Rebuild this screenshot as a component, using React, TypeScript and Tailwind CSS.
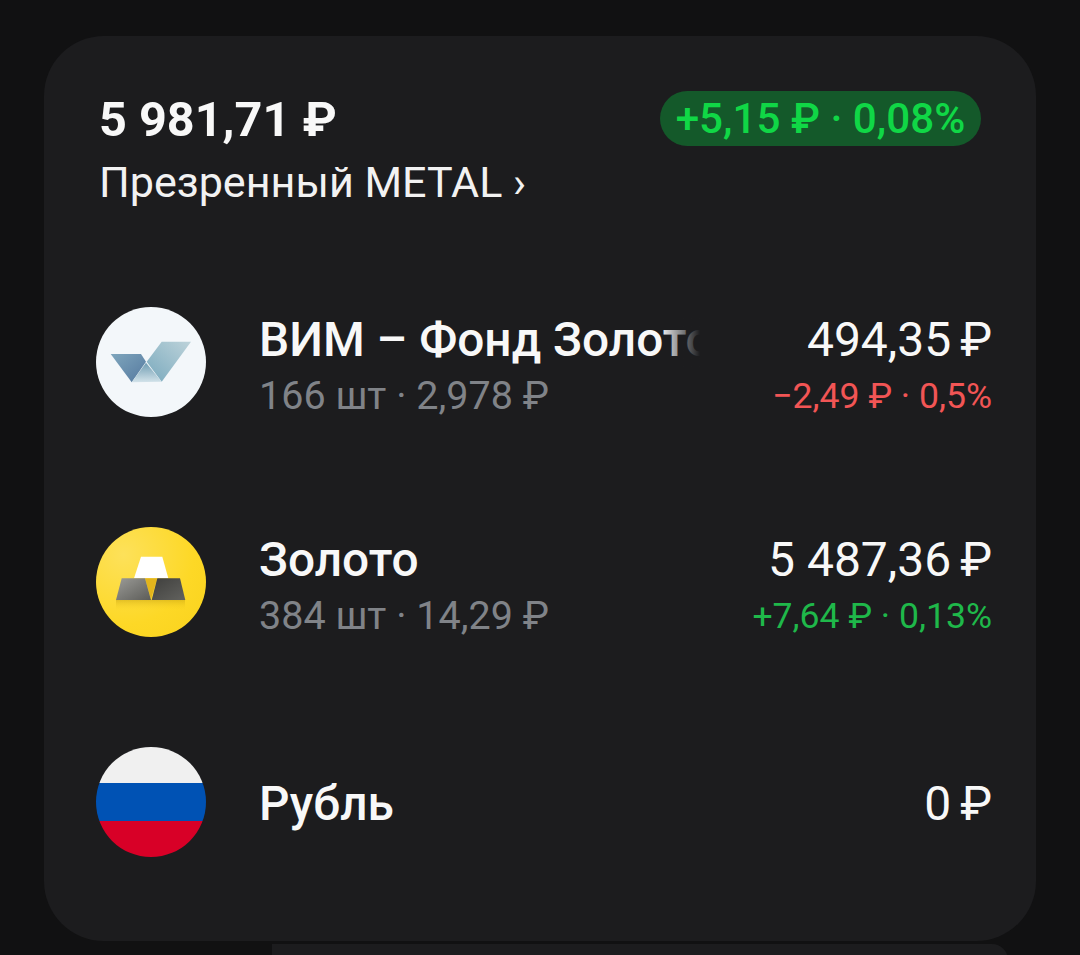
const ink = "font-['Roboto','Liberation_Sans',sans-serif]";

function VimLogo() {
  return (
    <div className="flex h-[110px] w-[110px] shrink-0 items-center justify-center rounded-full bg-[#f3f7fa]">
      <svg width="110" height="110" viewBox="0 0 110 110">
        <defs>
          <linearGradient id="vimLeft" x1="0" y1="0" x2="1" y2="1">
            <stop offset="0" stopColor="#7fa6bd" />
            <stop offset="1" stopColor="#55799f" />
          </linearGradient>
          <linearGradient id="vimRight" x1="1" y1="0" x2="0" y2="1">
            <stop offset="0" stopColor="#bdd3da" />
            <stop offset="1" stopColor="#79a9bd" />
          </linearGradient>
          <linearGradient id="vimMid" x1="0" y1="0" x2="0" y2="1">
            <stop offset="0" stopColor="#6f9cb2" />
            <stop offset="1" stopColor="#d3e3ea" />
          </linearGradient>
        </defs>
        <path d="M14.700 47 L45 47 L50 54.700 L35.700 75.300 Z" fill="url(#vimLeft)" />
        <path d="M50.700 54.700 L65.700 34.700 L95 34.700 L65.700 74.700 Z" fill="url(#vimRight)" />
        <path d="M50 55.700 L65.700 74.700 L35.700 75.300 Z" fill="url(#vimMid)" />
      </svg>
    </div>
  );
}

function GoldLogo() {
  return (
    <div className="flex h-[110px] w-[110px] shrink-0 items-center justify-center rounded-full bg-[radial-gradient(circle_at_25%_25%,#fde15a,#fdd826_60%,#f9d21c)]">
      <svg width="110" height="110" viewBox="0 0 110 110">
        <defs>
          <linearGradient id="barLeft" x1="0" y1="0" x2="1" y2="1">
            <stop offset="0" stopColor="#9b9b97" />
            <stop offset="1" stopColor="#5c5c58" />
          </linearGradient>
          <linearGradient id="barRight" x1="0" y1="0" x2="1" y2="1">
            <stop offset="0" stopColor="#3f3f3d" />
            <stop offset="1" stopColor="#62625e" />
          </linearGradient>
          <linearGradient id="barShadow" x1="0" y1="0" x2="0" y2="1">
            <stop offset="0" stopColor="#c9a412" stopOpacity="0.5" />
            <stop offset="1" stopColor="#fdd826" stopOpacity="0" />
          </linearGradient>
        </defs>
        <rect x="20" y="73" width="69" height="11" fill="url(#barShadow)" />
        <path d="M45 29.700 L66.300 29.700 L72.300 51.300 L38 51.300 Z" fill="#ffffff" />
        <path d="M49 51.300 L61.300 51.300 L55 72.300 Z" fill="#e3b51c" />
        <path d="M25.700 51.300 L49 51.300 L55 73 L20 73 Z" fill="url(#barLeft)" />
        <path d="M61.300 51.300 L84 51.300 L89.300 73 L55.700 73 Z" fill="url(#barRight)" />
      </svg>
    </div>
  );
}

function RuFlag() {
  return (
    <div className="flex h-[110px] w-[110px] shrink-0 flex-col overflow-hidden rounded-full">
      <div className="h-[36px] bg-[#f0f0f0]" />
      <div className="h-[38px] bg-[#0052b4]" />
      <div className="h-[36px] bg-[#d80027]" />
    </div>
  );
}

type Row = {
  logo: React.ReactNode;
  name: string;
  value: string;
  sub?: string;
  delta?: string;
  deltaColor?: string;
  fade?: boolean;
};

const rows: Row[] = [
  {
    logo: <VimLogo />,
    name: "ВИМ – Фонд Золото",
    value: "494,35",
    sub: "166 шт · 2,978 ₽",
    delta: "−2,49 ₽ · 0,5%",
    deltaColor: "text-[#f25555]",
    fade: true,
  },
  {
    logo: <GoldLogo />,
    name: "Золото",
    value: "5 487,36",
    sub: "384 шт · 14,29 ₽",
    delta: "+7,64 ₽ · 0,13%",
    deltaColor: "text-[#1fb84a]",
  },
  {
    logo: <RuFlag />,
    name: "Рубль",
    value: "0",
  },
];

export default function App() {
  return (
    <div className={`${ink} h-[955px] overflow-hidden bg-[#111112] pt-[36px]`}>
      <div className="mx-[44px] h-[905px] rounded-[60px] bg-[#1c1c1e] pl-[52px] pr-[44px] pt-[54px]">
        <div className="flex items-start justify-between pl-[3px]">
          <div>
            <div className="text-[48.6px] font-bold leading-[60px] text-[#f8f8f8]">5 981,71 ₽</div>
            <div className="mt-[5px] text-[43.100px] leading-[56px] text-[#f2f2f2]">Презренный METAL ›</div>
          </div>
          <div className="mr-[11px] mt-[1px] flex h-[55px] w-[321px] items-center justify-center rounded-full bg-[#14592a] pt-[1px] text-[42.2px] font-medium text-[#10d746]">
            +5,15 ₽ · 0,08%
          </div>
        </div>

        <div className="mt-[41px]">
          {rows.map((row) => (
            <div key={row.name} className="flex h-[220px] items-center">
              {row.logo}
              <div className={`ml-[53px] w-[441px] min-w-0 ${row.sub ? "pt-[12px]" : "pt-[4px]"}`}>
                <div className="relative overflow-hidden whitespace-nowrap text-[47.800px] font-medium leading-[56px] text-[#f8f8f8]">
                  {row.name}
                  {row.fade && (
                    <div className="absolute inset-y-0 right-0 w-[40px] bg-gradient-to-r from-transparent to-[#1c1c1e]" />
                  )}
                </div>
                {row.sub && <div className="text-[39.500px] leading-[56px] text-[#808388]">{row.sub}</div>}
              </div>
              <div className={`ml-auto text-right ${row.sub ? "pt-[12px]" : "pt-[4px]"}`}>
                <div className="whitespace-nowrap text-[48px] leading-[56px] text-[#f8f8f8]">
                  {row.value} <span className="-ml-[3px]">₽</span>
                </div>
                {row.delta && (
                  <div className={`whitespace-nowrap text-[35.600px] leading-[56px] ${row.deltaColor}`}>{row.delta}</div>
                )}
              </div>
            </div>
          ))}
        </div>
      </div>
      <div className="ml-[272px] mr-[72px] mt-[3px] h-[40px] rounded-tr-[16px] bg-[#1c1c1e]" />
    </div>
  );
}
